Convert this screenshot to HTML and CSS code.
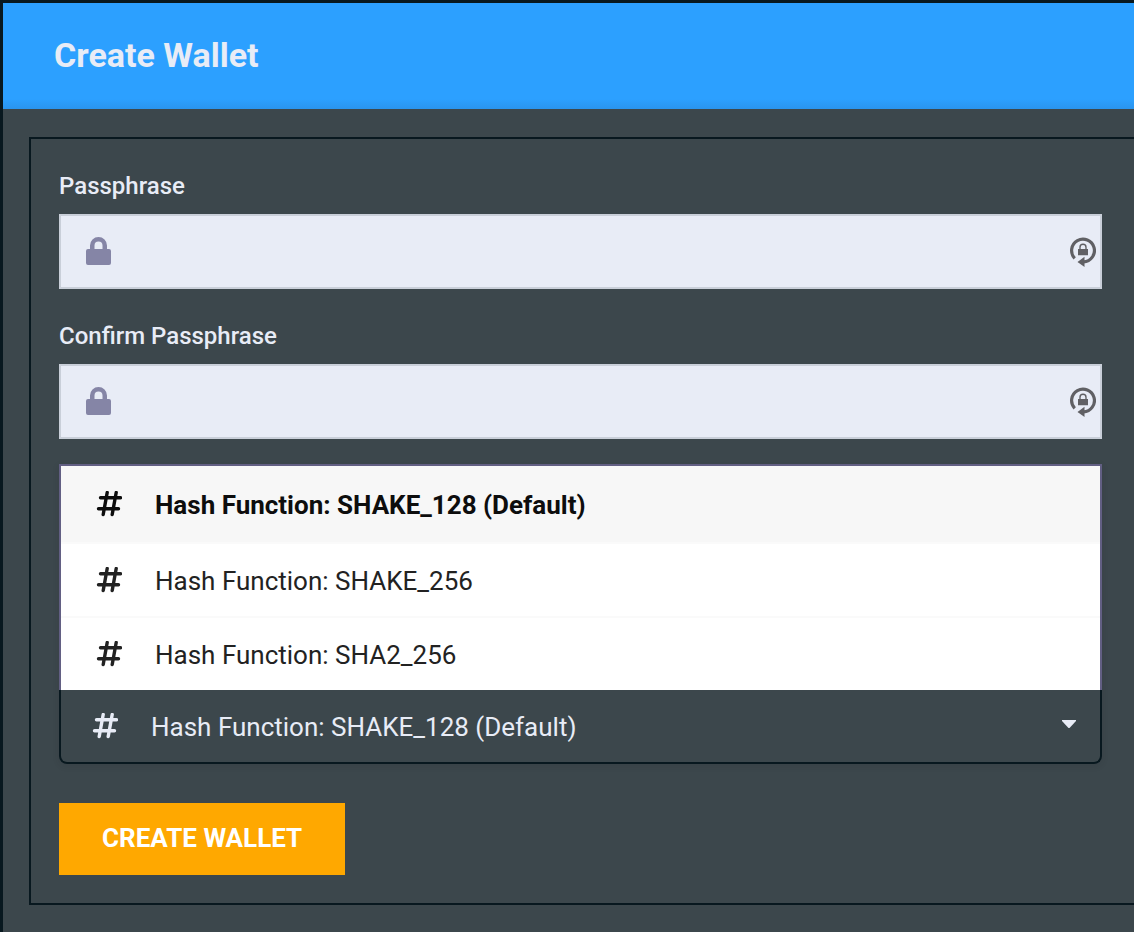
FILE: index.html
```html
<!DOCTYPE html>
<html lang="en">
<head>
<meta charset="utf-8">
<meta name="viewport" content="width=device-width, initial-scale=1">
<title>Create Wallet</title>
<link rel="stylesheet" href="styles.css">
</head>
<body>
<svg class="symbols" aria-hidden="true">
  <symbol id="lock" viewBox="0 0 25 28">
    <path d="M2 12h2V8.500a8.500 8.500 0 0 1 17 0V12h2a2 2 0 0 1 2 2v12a2 2 0 0 1-2 2H2a2 2 0 0 1-2-2V14a2 2 0 0 1 2-2zM8.500 12h8V8.500a4 4 0 0 0-8 0z" fill="currentColor" fill-rule="evenodd"/>
  </symbol>
  <symbol id="renew" viewBox="0 0 26 30">
    <path d="M4.700 21.300A11.400 11.400 0 1 1 13.500 24.900" fill="none" stroke="currentColor" stroke-width="3.200"/>
    <path d="M7.500 24.900l7-5.100v10.200z" fill="currentColor"/>
    <path d="M8 12h1.300V10.200a3.700 3.700 0 0 1 7.400 0v1.800H18v6.300H8zm2.700 0h4.600V10.200a2.300 2.300 0 0 0-4.600 0z" fill="currentColor" fill-rule="evenodd"/>
  </symbol>
  <symbol id="hash" viewBox="0 0 26 28">
    <path d="M11.200 1.500L7.200 23.500M20.200 1.500L16.200 23.500M4.500 6.800H24.500M2.500 17.800H22.500" fill="none" stroke="currentColor" stroke-width="3.400" stroke-linecap="round"/>
  </symbol>
</svg>
<main class="page">
  <header class="banner"><h1 class="title">Create Wallet</h1></header>
  <form class="card">
    <div class="field">
      <label class="label" for="pass">Passphrase</label>
      <div class="control">
        <input class="input" id="pass" type="password">
        <svg class="lock"><use href="#lock"/></svg>
        <svg class="renew"><use href="#renew"/></svg>
      </div>
    </div>
    <div class="field">
      <label class="label" for="confirm">Confirm Passphrase</label>
      <div class="control">
        <input class="input" id="confirm" type="password">
        <svg class="lock"><use href="#lock"/></svg>
        <svg class="renew"><use href="#renew"/></svg>
      </div>
    </div>
    <div class="dropdown">
      <div class="menu" id="menu" role="listbox" aria-label="Hash function">
        <button class="option selected" type="button" role="option" aria-selected="true"><svg class="hash"><use href="#hash"/></svg>Hash Function: SHAKE_128 (Default)</button>
        <button class="option" type="button" role="option" aria-selected="false"><svg class="hash"><use href="#hash"/></svg>Hash Function: SHAKE_256</button>
        <button class="option" type="button" role="option" aria-selected="false"><svg class="hash"><use href="#hash"/></svg>Hash Function: SHA2_256</button>
      </div>
      <button class="trigger" type="button" aria-haspopup="listbox" aria-expanded="true" aria-controls="menu"><svg class="hash"><use href="#hash"/></svg><span class="value">Hash Function: SHAKE_128 (Default)</span><svg class="caret" viewBox="0 0 14 14"><path d="M0 0h14v1L8 7.500Q7 8.500 6 7.500L0 1z" fill="currentColor"/></svg></button>
    </div>
    <button class="submit" type="submit">CREATE WALLET</button>
  </form>
</main>
</body>
</html>
```
FILE: styles.css
```css
* { box-sizing: border-box; }
body { margin: 0; background: #3c474c; color: #e8ecf6; font-family: Roboto, "Liberation Sans", sans-serif; }
button, input { font: inherit; }
.symbols { position: absolute; width: 0; height: 0; }
.page { min-height: 100vh; border: solid #08181f; border-width: 3px 0 0 3px; }
.banner { padding: 32px 51px 34px; background: linear-gradient(to top, #2a94ee, #2ca0ff 10px); }
.title { margin: 0; font-size: 34px; line-height: 40px; font-weight: 700; }
.card { margin: 28px 0 0 26px; padding: 28px 32px 28px 28px; border: 2px solid #08181f; border-right: 0; }
.field { margin-bottom: 28px; }
.label { display: block; margin-bottom: 8px; font-size: 24px; line-height: 39px; font-weight: 500; }
.control { position: relative; }
.input { display: block; width: 100%; height: 75px; padding: 0 40px 0 80px; border: 2px solid #c9cfd9; border-radius: 0; background: #e8ecf6; color: #222; font-size: 26px; }
.lock { position: absolute; left: 27px; top: 23px; width: 25px; height: 28px; color: #8585a6; }
.renew { position: absolute; right: 6px; top: 23px; width: 26px; height: 30px; color: #606064; }
.dropdown { margin-top: -3px; box-shadow: 0 2px 6px rgba(34, 36, 38, .15); font-size: 26px; border-radius: 0 0 8px 8px; }
.menu { border: 2px solid #625f83; border-bottom: 0; background: #fff; }
.option { display: flex; align-items: center; gap: 33px; width: 100%; height: 74px; padding: 2px 35px 0; border: 0; border-bottom: 2px solid #fafafa; background: #fff; color: #222; text-align: left; }
.option:last-child { height: 72px; border-bottom: 0; }
.option.selected { height: 78px; background: #f7f7f7; color: #0d0d0d; font-weight: 700; }
.hash { flex: none; width: 26px; height: 28px; }
.trigger { display: flex; align-items: center; gap: 33px; width: 100%; height: 74px; padding: 2px 24px 0 31px; border: 2px solid #08181f; border-top: 0; border-radius: 0 0 8px 8px; background: #3c474c; color: #e8ecf6; text-align: left; }
.value { flex: 1; }
.caret { flex: none; width: 14px; height: 14px; }
.submit { display: block; margin-top: 39px; padding: 0 43px 2px; border: 0; background: #ffa800; color: #fff; font-size: 26px; line-height: 70px; font-weight: 700; }
```
